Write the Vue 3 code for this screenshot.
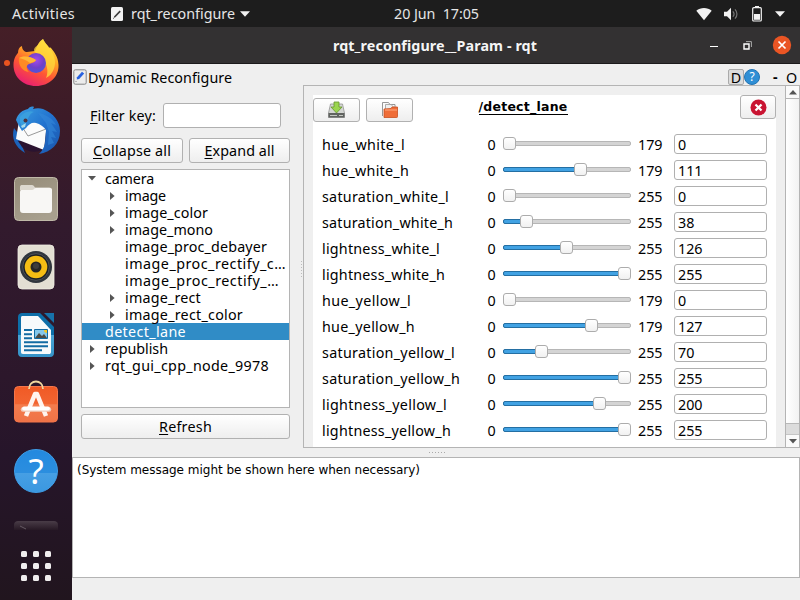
<script setup>
const tree = [
  { label: 'camera', level: 0, arrow: 'down', w: 49 },
  { label: 'image', level: 1, arrow: 'right', w: 41 },
  { label: 'image_color', level: 1, arrow: 'right', w: 83 },
  { label: 'image_mono', level: 1, arrow: 'right', w: 88 },
  { label: 'image_proc_debayer', level: 1, w: 142 },
  { label: 'image_proc_rectify_c…', level: 1, w: 161 },
  { label: 'image_proc_rectify_…', level: 1, w: 154 },
  { label: 'image_rect', level: 1, arrow: 'right', w: 76 },
  { label: 'image_rect_color', level: 1, arrow: 'right', w: 118 },
  { label: 'detect_lane', level: 0, selected: true, w: 81 },
  { label: 'republish', level: 0, arrow: 'right', w: 63 },
  { label: 'rqt_gui_cpp_node_9978', level: 0, arrow: 'right', w: 164 }
]

const params = [
  { name: 'hue_white_l', max: 179, value: 0, w: 83 },
  { name: 'hue_white_h', max: 179, value: 111, w: 87 },
  { name: 'saturation_white_l', max: 255, value: 0, w: 127 },
  { name: 'saturation_white_h', max: 255, value: 38, w: 131 },
  { name: 'lightness_white_l', max: 255, value: 126, w: 118 },
  { name: 'lightness_white_h', max: 255, value: 255, w: 123 },
  { name: 'hue_yellow_l', max: 179, value: 0, w: 89 },
  { name: 'hue_yellow_h', max: 179, value: 127, w: 93 },
  { name: 'saturation_yellow_l', max: 255, value: 70, w: 133 },
  { name: 'saturation_yellow_h', max: 255, value: 255, w: 138 },
  { name: 'lightness_yellow_l', max: 255, value: 200, w: 125 },
  { name: 'lightness_yellow_h', max: 255, value: 255, w: 129 }
]

const knobLeft = (p) => (p.value / p.max) * 115 + 'px'
const fillWidth = (p) => (p.value ? (p.value / p.max) * 115 + 6 : 0) + 'px'

// Tracks a label so that it spans the given number of pixels.
const vFit = {
  mounted(el, { value }) {
    const natural = el.getBoundingClientRect().width
    el.style.letterSpacing = (value - natural) / el.textContent.length + 'px'
  }
}
</script>

<template>
  <div class="desktop">
    <header class="topbar">
      <span v-fit="63" class="t activities">Activities</span>
      <svg class="app-icon" width="12" height="14" viewBox="0 0 12 14">
        <rect width="12" height="14" rx="1.5" fill="#f3f3f3" />
        <path d="M3.2 9.3 8.6 3.6l1.2 1.1-5.4 5.6-1.8.6z" fill="#3a3a3a" />
        <path d="M2 11.5h1" stroke="#888" />
      </svg>
      <span v-fit="104" class="t">rqt_reconfigure</span>
      <svg class="caret" width="10" height="6" viewBox="0 0 10 6"><path d="M0 .3h10L5 5.7z" fill="#f2f2f2" /></svg>
      <span v-fit="85" class="t clock">20 Jun&nbsp; 17:05</span>
      <div class="status">
        <svg width="16" height="14" viewBox="0 0 16 14"><path d="M.3 3.7C4.5.2 11.5.2 15.7 3.7L8 13.3z" fill="#f2f2f2" /></svg>
        <svg width="16" height="14" viewBox="0 0 16 14">
          <path d="M1 4.7h3L8 .8v12.4L4 9.3H1z" fill="#f2f2f2" />
          <path d="M9.8 4.3c1.400 1.500 1.400 3.900 0 5.400M12 2.300c2.600 2.600 2.600 6.800 0 9.400" fill="none" stroke="#777" stroke-width="1.2" />
        </svg>
        <svg width="10" height="16" viewBox="0 0 10 16">
          <path d="M3 0h4v2H3z" fill="#f2f2f2" />
          <rect x=".7" y="1.7" width="8.6" height="13.3" rx="1" fill="none" stroke="#f2f2f2" stroke-width="1.2" />
          <path d="M2 8h6v5.8H2z" fill="#f2f2f2" />
        </svg>
        <svg width="10" height="6" viewBox="0 0 10 6"><path d="M0 .3h10L5 5.7z" fill="#f2f2f2" /></svg>
      </div>
    </header>

    <div class="main">
      <nav class="dock">
        <div class="slot">
          <i class="running"></i>
          <svg width="48" height="50" viewBox="0 0 48 50">
            <defs>
              <linearGradient id="ffa" x1=".8" y1="0" x2=".3" y2="1">
                <stop offset="0" stop-color="#fff04a" /><stop offset=".35" stop-color="#ffa924" />
                <stop offset=".65" stop-color="#ff5634" /><stop offset="1" stop-color="#e81d74" />
              </linearGradient>
              <radialGradient id="ffb" cx=".5" cy=".35" r=".65">
                <stop offset="0" stop-color="#a34bea" /><stop offset=".6" stop-color="#7040c8" /><stop offset="1" stop-color="#4d55d8" />
              </radialGradient>
            </defs>
            <path d="M31 1c2 5 5 6 6 9 1-1 2 0 2 0 3 4 7 8 7.500 17C47 39 37 48 24 48S1.500 39 1.500 27C1.500 21 4 17 6 15c0-3 1-6 4-7 0 4 3 6 5 6l8-1C25 9 26 4 31 1z" fill="url(#ffa)" />
            <path d="M31 1c3 6 8 9 10 15 5 10 0 21-7 24 3-7 1-14-4-20-4-5-8-5-8-8s5-5 9-11z" fill="#ffdc3e" opacity=".75" />
            <circle cx="24" cy="25" r="10" fill="url(#ffb)" />
            <path d="M7 20c5-3 11-2 17 2-1 3-5 3-7 4-4 2-2 6 0 8-7-1-11-7-10-14z" fill="#ff8a25" />
            <path d="M7 20c6-3 12-1 17 2-1 2-4 2-6 3-4-3-7-4-11-5z" fill="#ffb638" />
          </svg>
        </div>
        <div class="slot">
          <svg width="50" height="50" viewBox="0 0 50 50">
            <defs><linearGradient id="tb" x1="0" y1="0" x2="1" y2="1"><stop offset="0" stop-color="#3aa0e2" /><stop offset=".5" stop-color="#2272cf" /><stop offset="1" stop-color="#1a55ac" /></linearGradient></defs>
            <path d="M3 22c-3 10 1 19 11 25l-3-7 8-6-13-8z" fill="#1c63bb" />
            <path d="M7 35c9-1 19 4 25 9-7 3-16 2-21-3z" fill="#2a1330" />
            <path d="M8 15 36 17l-3 27L5 33z" fill="#fbfbfb" />
            <path d="m8 16 9 14 18-7" fill="none" stroke="#999" stroke-width="1" />
            <path d="M5 14C7 7 12 4 17 3c1-2 4-3 6-2l-1 2c3-1 7-1 10 0 10 4 17 12 17 22 0 13-9 21-21 23 3-3 5-6 6-11l1-13c-2-3-6-6-10-7-4-1-7 1-10 5l-4 3-3-5z" fill="url(#tb)" />
            <path d="M9 11c4-5 9-7 14-5-4 1-5 5-8 10l-4 5-2-5z" fill="#3a9fdd" />
            <path d="m10 20 5-3-1 4-3 1z" fill="#a9dceb" /><circle cx="14.500" cy="14.500" r="2" fill="#4d3340" />
            <path d="M27 7c8 1 15 6 18 12l-5-2 6 9-5-1 4 7-5-1 3 6-6 2 1-13-3-9z" fill="#3387d8" opacity=".6" />
          </svg>
        </div>
        <div class="slot">
          <svg width="46" height="46" viewBox="0 0 46 46">
            <defs><linearGradient id="fi" x2=".6" y2="1"><stop stop-color="#948b78" /><stop offset="1" stop-color="#a8a08e" /></linearGradient></defs>
            <rect x="1.500" y="1.500" width="43" height="43" rx="4" fill="url(#fi)" stroke="#c0b9a8" />
            <path d="M7 11c0-1.500 1-2 2-2h10c1.500 0 2 1 3 2.500H36c2 0 3 1 3 3H7z" fill="#dcd8cf" />
            <path d="M7 16c0-1.500 1-2 2-2h10c2 0 2-2 4-2h14c1.500 0 2 1 2 2v20c0 1.500-1 3-3 3H10c-2 0-3-1-3-3z" fill="#f8f7f5" />
          </svg>
        </div>
        <div class="slot">
          <svg width="46" height="46" viewBox="0 0 46 46">
            <rect x="5" y="1" width="36" height="44" rx="4" fill="#e3dfd3" stroke="#f0ede4" stroke-width=".8" />
            <circle cx="23" cy="23" r="16" fill="#30363d" /><circle cx="23" cy="23" r="13.300" fill="#1c2025" stroke="#555b62" stroke-width=".8" />
            <circle cx="23" cy="23" r="11.300" fill="#f5bd14" /><circle cx="23" cy="23" r="5.500" fill="#252525" /><circle cx="23" cy="22" r="3" fill="#3c3c3c" />
          </svg>
        </div>
        <div class="slot">
          <svg width="46" height="46" viewBox="0 0 46 46">
            <defs><linearGradient id="lw" x2="0" y2="1"><stop stop-color="#0d6fa9" /><stop offset=".5" stop-color="#0d6fa9" /><stop offset=".51" stop-color="#4aa4d4" /><stop offset="1" stop-color="#3492c7" /></linearGradient></defs>
            <path d="M9 1h18l14 14v26c0 2-1 4-4 4H9c-3 0-4-2-4-4V5c0-3 2-4 4-4z" fill="url(#lw)" />
            <path d="M9.500 4H25l13 14v22c0 1.500-1 2-2 2H10c-1.500 0-2-1-2-2V6c0-1.500.5-2 1.500-2z" fill="#f7fafb" />
            <path d="M31 1h10v10z" fill="#1772aa" />
            <path d="M11 18h8M11 22.300h8M11 26.300h8M11 30.300h24M11 34.300h24M11 38.300h18" stroke="#126ba3" stroke-width="2" />
            <path d="M21.500 17.500h13v9h-13z" fill="#84c7eb" stroke="#126ba3" />
            <path d="m22 26 4-5 3 3 2-2 3 4z" fill="#4b4b45" /><path d="M31 18h3v3c-2 0-3-1-3-3z" fill="#f3c623" />
          </svg>
        </div>
        <div class="slot software">
          <svg width="46" height="46" viewBox="0 0 46 46">
            <defs><linearGradient id="so" x2="0" y2="1"><stop stop-color="#f05a25" /><stop offset=".5" stop-color="#f26532" /><stop offset=".51" stop-color="#f47c4d" /><stop offset="1" stop-color="#ef7347" /></linearGradient></defs>
            <rect x="1.500" y="8.500" width="43" height="35.500" rx="4" fill="url(#so)" stroke="#f5764b" />
            <path d="M16 11c0-10 14-10 14 0" fill="none" stroke="#efd79f" stroke-width="1.800" />
            <path d="m13 38 9-22h2l9 22" fill="none" stroke="#fff4ef" stroke-width="4.500" stroke-linejoin="round" />
            <path d="M10 31.500h26" stroke="#f0cdbd" stroke-width="4.500" stroke-linecap="round" /><path d="M11 30.500h24" stroke="#fff" stroke-width="3.800" stroke-linecap="round" />
          </svg>
        </div>
        <div class="slot help-slot"><span class="help-icon">?</span></div>
        <svg class="faded" width="46" height="12" viewBox="0 0 46 12">
          <defs><linearGradient id="te" x2="0" y2="1"><stop stop-color="#493c47" /><stop offset="1" stop-color="#271925" /></linearGradient></defs>
          <path d="M1 10V5c0-3 2-4 4-4h36c2 0 4 1 4 4v5z" fill="url(#te)" /><path d="m7 6 6 3" stroke="#655a63" />
        </svg>
        <div class="apps"><i v-for="n in 9" :key="n"></i></div>
      </nav>

      <section class="window">
        <div class="titlebar">
          <span v-fit="204" class="t wtitle">rqt_reconfigure__Param - rqt</span>
          <div class="winctl">
            <i class="min"></i>
            <svg width="9" height="9" viewBox="0 0 9 9"><path d="M1 3h5v5H1z" fill="none" stroke="#fff" stroke-width="1.4" /><path d="M3 .6h5.400V6" fill="none" stroke="#aaa" /></svg>
            <svg width="20" height="20" viewBox="0 0 20 20"><circle cx="10" cy="10" r="9.2" fill="#ea5524" /><path d="m6.500 6.500 7 7m0-7-7 7" stroke="#fff" stroke-width="1.7" /></svg>
          </div>
        </div>

        <div class="dockhead">
          <svg width="14" height="16" viewBox="0 0 14 16">
            <rect x=".8" y=".8" width="12.400" height="14.400" rx="1.500" fill="#ececec" stroke="#858585" />
            <path d="m4 8.300 5-5.500 2.200 1.800-5 5.300-2.400.5z" fill="#2862e0" /><path d="M2.500 12.500h1" stroke="#888" />
          </svg>
          <span v-fit="144" class="t">Dynamic Reconfigure</span>
          <div class="dockctl">
            <span class="dbtn">D</span><span class="qbtn">?</span><b class="dash">-</b><span class="obtn">O</span>
          </div>
        </div>

        <div class="body">
          <aside class="left">
            <div class="filter"><span v-fit="66" class="t"><u>F</u>ilter key:</span><div class="field"></div></div>
            <div class="btnrow">
              <div class="btn w1"><span v-fit="78" class="t"><u>C</u>ollapse all</span></div>
              <div class="btn w2"><span v-fit="70" class="t"><u>E</u>xpand all</span></div>
            </div>
            <div class="tree">
              <div v-for="n in tree" :key="n.label" class="node" :class="['lv' + n.level, { selected: n.selected }]">
                <span class="twist">
                  <svg v-if="n.arrow === 'down'" width="8" height="5" viewBox="0 0 8 5"><path d="M0 0h8L4 4.600z" fill="#555" /></svg>
                  <svg v-else-if="n.arrow" width="5" height="8" viewBox="0 0 5 8"><path d="M0 0v8l4.600-4z" fill="#555" /></svg>
                </span>
                <span v-fit="n.w" class="t">{{ n.label }}</span>
              </div>
            </div>
            <div class="btn refresh"><span v-fit="53" class="t"><u>R</u>efresh</span></div>
          </aside>
          <div class="vsplit"></div>
          <div class="right">
            <div class="sheet">
              <div class="tools">
                <div class="btn tool">
                  <svg width="17" height="18" viewBox="0 0 17 18">
                    <path d="M2.500 3h12l2 9v4.500H.5V12z" fill="#d4d6d3" stroke="#888" stroke-width=".7" /><path d="M.5 12h16v4.500H.5z" fill="#606360" /><path d="M2 14.500h7M11 14.500h4" stroke="#c5c8c3" />
                    <path d="M6 1h5v5h3l-5.500 6L3 6h3z" fill="#9bd54f" stroke="#68942e" stroke-width=".8" />
                  </svg>
                </div>
                <div class="btn tool">
                  <svg width="18" height="18" viewBox="0 0 18 18">
                    <path d="M1.500 15V1.500h6L9 3.500h5V12" fill="#fafafa" stroke="#8b8b8b" stroke-width=".9" /><path d="M4.500 3.500H10l3 3V13h-8.500z" fill="#eee" stroke="#999" stroke-width=".8" />
                    <path d="m3 8 7-.5 1-1.500h5.500v9.500c0 1-.5 1-1 1H3z" fill="#ef6d38" stroke="#c64f21" stroke-width=".8" /><path d="M4 9h12" stroke="#ffab80" />
                  </svg>
                </div>
                <span v-fit="89" class="t heading">/detect_lane</span>
                <div class="btn closeb">
                  <svg width="17" height="17" viewBox="0 0 17 17"><circle cx="8.500" cy="8.500" r="8" fill="#c91432" /><path d="m5.500 5.500 6 6m0-6-6 6" stroke="#fff" stroke-width="2.3" /></svg>
                </div>
              </div>
              <div v-for="p in params" :key="p.name" class="param">
                <span class="pname"><span v-fit="p.w" class="t">{{ p.name }}</span></span>
                <span class="pmin">0</span>
                <div class="slider">
                  <div class="track"><div class="fill" :class="{ none: !p.value }" :style="{ width: fillWidth(p) }"></div></div>
                  <div class="knob" :style="{ left: knobLeft(p) }"></div>
                </div>
                <span class="pmax">{{ p.max }}</span>
                <div class="pval">{{ p.value }}</div>
              </div>
            </div>
            <div class="scroll">
              <div class="sb up"><svg width="8" height="5" viewBox="0 0 8 5"><path d="M0 4.600h8L4 0z" fill="#555" /></svg></div>
              <div class="thumb"></div>
              <div class="groove"></div>
              <div class="sb down"><svg width="8" height="5" viewBox="0 0 8 5"><path d="M0 0h8L4 4.600z" fill="#555" /></svg></div>
            </div>
          </div>
        </div>
        <div class="hsplit"></div>
        <div class="log"><span v-fit="343" class="t">(System message might be shown here when necessary)</span></div>
      </section>
    </div>
  </div>
</template>

<style>
body { margin: 0; overflow: hidden; }
</style>

<style scoped>
* { box-sizing: border-box; }
svg { display: block; flex: none; }
.desktop { width: 800px; height: 600px; display: flex; flex-direction: column; overflow: hidden; font-family: "Noto Sans", "Open Sans", sans-serif; font-size: 14.3px; line-height: 17px; color: #000; }
.t { display: inline-block; white-space: pre; flex: none; }
u { text-decoration: underline; text-decoration-thickness: 1px; text-underline-offset: 2px; }
.topbar { height: 27px; flex: none; background: #1d1d1d; color: #e6e6e6; display: flex; align-items: center; padding: 0 15px 0 12px; }
.app-icon { margin: 0 8px 0 36px; }
.caret { margin-left: 5px; }
.clock { margin-left: 144px; }
.status { margin-left: auto; display: flex; align-items: center; gap: 12px; }
.status svg:nth-child(1) { margin-right: -1px; }
.status svg:nth-child(3) { margin-left: 1px; }
.status svg:nth-child(4) { margin-left: 1px; }
.main { flex: 1; min-height: 0; display: flex; }
.dock { width: 72px; flex: none; padding-top: 2px; display: flex; flex-direction: column; align-items: center; background: linear-gradient(#451f27 0, #3c1b28 90px, #321a2d 200px, #2c172b 350px, #26152a 430px, #21151e 573px); }
.slot { width: 72px; height: 68px; flex: none; display: flex; align-items: center; justify-content: center; position: relative; }
.software { padding-bottom: 5px; }
.running { position: absolute; left: 4px; top: 31px; width: 6px; height: 6px; border-radius: 50%; background: #e95420; }
.help-icon { width: 44px; height: 44px; border-radius: 50%; background: linear-gradient(#2389df 0, #2b8edf 54%, #469fe4 55%, #3b98e0 100%); border: 1px solid #3e9ee9; color: #fff; font-size: 35px; line-height: 41px; text-align: center; }
.faded { margin-top: 15px; }
.apps { margin-top: 19px; display: grid; grid-template-columns: repeat(3, 6px); gap: 6px; }
.apps i { width: 6px; height: 6px; border-radius: 1.5px; background: #f0eeee; }
.window { flex: 1; min-width: 0; display: flex; flex-direction: column; background: #efefef; }
.titlebar { height: 37px; flex: none; background: #333132; border-bottom: 1px solid #1b1a1b; color: #f5f5f5; font-weight: 700; display: flex; align-items: center; padding: 0 8px 0 261px; }
.winctl { margin-left: auto; display: flex; align-items: center; }
.min { width: 8px; height: 1px; background: #fff; margin: 3px 25px 0 0; }
.winctl svg:nth-child(2) { margin-right: 20px; }
.dockhead { height: 21px; flex: none; display: flex; align-items: center; padding: 5px 2px 0 1px; gap: 1px; }
.dockhead > svg { margin-top: -1px; }
.dockhead > .t { margin-top: 1px; }
.dockctl { margin-left: auto; display: flex; align-items: center; }
.dbtn { width: 16px; height: 16px; border: 1px solid #aaa; border-radius: 2px; background: #dcdcdc; text-align: center; line-height: 16px; }
.qbtn { width: 16px; height: 16px; border-radius: 50%; background: #2f8fd5; border: 1px solid #2274b4; color: #fff; font-size: 12px; line-height: 14px; text-align: center; }
.dash { margin-left: 13px; width: 6px; line-height: 18px; }
.obtn { margin-left: 7px; width: 12px; line-height: 18px; padding-top: 1px; }
.body { height: 363px; flex: none; display: flex; }
.left { width: 218px; flex: none; padding: 18px 0 0 9px; display: flex; flex-direction: column; }
.filter { height: 25px; display: flex; align-items: center; padding-left: 9px; }
.field { width: 118px; height: 25px; margin-left: 7px; border: 1px solid #b0b0b0; border-radius: 3px; background: #fff; }
.btnrow { display: flex; gap: 6px; margin-top: 10px; }
.btn { height: 25px; display: flex; align-items: center; justify-content: center; border: 1px solid #b1b1b1; border-radius: 3px; background: linear-gradient(#fff, #eee); }
.w1 { width: 102px; }
.w2 { width: 101px; }
.tree { height: 239px; margin-top: 6px; border: 1px solid #b4b4b4; background: #fff; }
.node { height: 17px; display: flex; align-items: center; padding-left: 6px; }
.lv1 { padding-left: 26px; }
.twist { width: 17px; flex: none; display: flex; align-items: center; }
.twist svg[width="5"] { margin-left: 2px; }
.selected { background: #308cc6; color: #fff; }
.refresh { margin-top: 6px; }
.vsplit { width: 13px; flex: none; display: flex; padding: 175px 0 0 10px; }
.vsplit::before { content: ""; width: 3px; height: 17px; background: radial-gradient(circle, #bbb .5px, transparent .8px) 0 0 / 3px 3px; }
.right { flex: 1; min-width: 0; border: 1px solid #b4b4b4; border-right: 0; display: flex; }
.sheet { width: 463px; flex: none; margin: 9px 9px 0 9px; background: #fff; }
.tools { height: 36px; display: flex; align-items: flex-start; }
.tool { width: 47px; height: 24px; margin: 3px 6px 0 0; }
.heading { font-family: "DejaVu Sans", sans-serif; font-weight: 700; font-size: 12.5px; margin: 5px 0 0 59.5px; border-bottom: 1px solid #000; line-height: 14px; height: 15px; }
.closeb { width: 36px; height: 24px; margin-left: auto; }
.param { height: 26px; display: flex; align-items: center; padding-left: 9px; line-height: 20px; }
.pname { width: 165.5px; padding-top: 2px; }
.pmin { width: 15.5px; padding-top: 2px; }
.slider { width: 128px; height: 13px; margin-top: -1px; position: relative; padding-top: 4px; }
.track { height: 5px; border: 1px solid #b6b6b6; border-radius: 2px; background: #d4d4d4; }
.fill { height: 5px; margin: -1px; border: 1px solid #246fa3; border-radius: 2px; background: #41a2e3; }
.fill.none { display: none; }
.knob { position: absolute; top: 0; width: 13px; height: 13px; border: 1px solid #acacac; border-radius: 3px; background: linear-gradient(#fff, #f1f1f1); }
.pmax { width: 36px; margin-left: 7px; padding-top: 2px; }
.pval { width: 93px; height: 20px; border: 1px solid #b0b0b0; border-radius: 3px; padding-left: 3px; line-height: 19px; background: #fff; }
.scroll { width: 15px; display: flex; flex-direction: column; border-left: 1px solid #b4b4b4; border-right: 1px solid #b4b4b4; }
.sb { height: 13px; flex: none; display: flex; align-items: center; justify-content: center; background: #fafafa; }
.up { border-bottom: 1px solid #b4b4b4; }
.down { border-top: 1px solid #c5c5c5; }
.thumb { flex: 1; background: linear-gradient(90deg, #fff, #f2f2f2); }
.groove { height: 11px; background: #dcdcdc; border-top: 1px solid #b8b8b8; }
.hsplit { height: 9px; flex: none; padding: 3px 0 0 356px; }
.hsplit::before { content: ""; display: block; width: 18px; height: 3px; background: radial-gradient(circle, #aaa .7px, transparent .9px) 0 0 / 3px 3px; }
.log { height: 121px; flex: none; background: #fff; border: 1px solid #b4b4b4; padding: 4px; font-family: "DejaVu Sans", sans-serif; font-size: 12px; line-height: 16px; }
</style>
